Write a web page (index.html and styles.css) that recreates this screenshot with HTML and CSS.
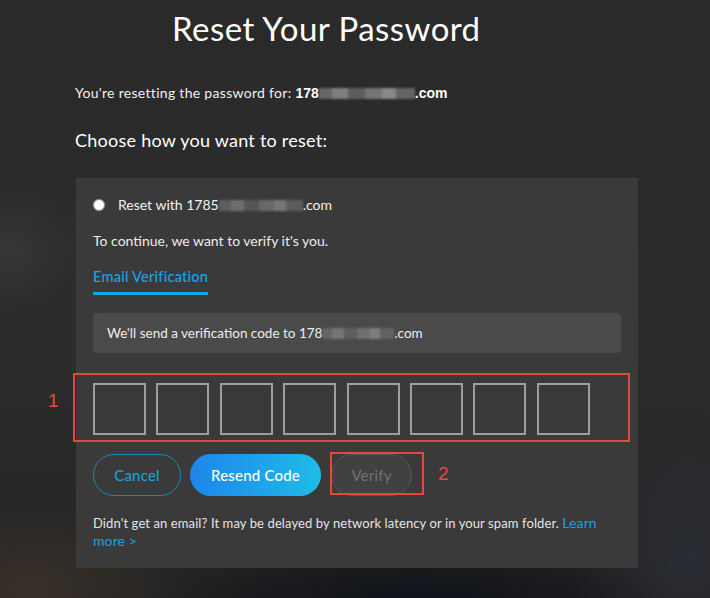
FILE: index.html
```html
<!DOCTYPE html>
<html lang="en">
<head>
<meta charset="utf-8">
<title>Reset Your Password</title>
<link rel="stylesheet" href="styles.css">
</head>
<body>
<main class="page">
  <h1 class="title">Reset Your Password</h1>
  <p class="lead">You're resetting the password for: <b class="acct">178<span class="blur b1"></span>.com</b></p>
  <h2 class="choose">Choose how you want to reset:</h2>
  <section class="panel">
    <label class="option"><span class="radio"></span><span>Reset with 1785<span class="blur b2"></span>.com</span></label>
    <p class="note">To continue, we want to verify it's you.</p>
    <div class="tabs"><span class="tab active">Email Verification</span></div>
    <div class="info">We'll send a verification code to 178<span class="blur b3"></span>.com</div>
    <div class="code-wrap">
      <div class="code-row">
        <span class="cell"></span><span class="cell"></span><span class="cell"></span><span class="cell"></span>
        <span class="cell"></span><span class="cell"></span><span class="cell"></span><span class="cell"></span>
      </div>
      <span class="mark mark1"></span><span class="mark-num n1">1</span>
    </div>
    <div class="actions">
      <button class="btn cancel">Cancel</button>
      <button class="btn resend">Resend Code</button>
      <span class="verify-wrap"><button class="btn verify">Verify</button><span class="mark mark2"></span><span class="mark-num n2">2</span></span>
    </div>
    <p class="help">Didn't get an email? It may be delayed by network latency or in your spam folder. <a class="link" href="#">Learn more &gt;</a></p>
  </section>
</main>
</body>
</html>
```
FILE: styles.css
```css
html, body {
  margin: 0;
  padding: 0;
  height: 100%;
}
body {
  font-family: "Lato", "Open Sans", sans-serif;
  color: #f2f2f2;
  background:
    radial-gradient(ellipse 160px 90px at 30px 590px, rgba(80, 64, 48, 0.5), transparent),
    radial-gradient(ellipse 260px 80px at 420px 610px, rgba(10, 14, 22, 0.9), transparent),
    radial-gradient(ellipse 120px 140px at 690px 560px, rgba(50, 56, 70, 0.45), transparent),
    radial-gradient(ellipse 80px 60px at 10px 250px, rgba(70, 70, 70, 0.4), transparent),
    linear-gradient(180deg, #2a2a2a 0%, #2c2c2c 60%, #222222 100%);
  overflow: hidden;
}
.page {
  padding: 8px 0 0 75px;
}
.title {
  margin: 0 0 0 97px;
  font-size: 33px;
  line-height: 40px;
  font-weight: 400;
  color: #ffffff;
  letter-spacing: 0.45px;
}
.lead {
  margin: 36px 0 0 0;
  font-size: 14px;
  line-height: 18px;
  color: #f0f0f0;
  letter-spacing: 0.3px;
}
.acct {
  font-family: "Liberation Sans", Arial, sans-serif;
  font-weight: 700;
  color: #ffffff;
  letter-spacing: 0;
}
.blur {
  display: inline-block;
  vertical-align: -1px;
  height: 11px;
  filter: blur(0.8px);
  opacity: 0.75;
  background:
    linear-gradient(90deg, #7a7a7a 0 14%, #9a9a9a 14% 30%, #6e6e6e 30% 48%, #8e8e8e 48% 66%, #a8a8a8 66% 80%, #777 80% 100%);
}
.b1 { width: 96px; }
.b2 { width: 84px; opacity: 0.55; }
.b3 { width: 72px; opacity: 0.55; }
.choose {
  margin: 27px 0 0 0;
  font-size: 18px;
  line-height: 22px;
  font-weight: 400;
  color: #ffffff;
  letter-spacing: 0.25px;
}
.panel {
  margin: 27px 0 0 1px;
  width: 528px;
  padding: 18px 17px 18px 17px;
  background: #3a3a3a;
  color: #ececec;
}
.option {
  display: flex;
  align-items: center;
  gap: 13px;
  font-size: 14px;
  line-height: 18px;
  color: #f2f2f2;
}
.radio {
  width: 10px;
  height: 10px;
  border-radius: 50%;
  background: #ffffff;
  border: 1.5px solid #8c8c8c;
  box-shadow: 0 0 0 0.5px #555;
  flex: none;
}
.note {
  margin: 18px 0 0 0;
  font-size: 14px;
  line-height: 18px;
}
.tabs {
  margin-top: 17px;
  display: flex;
}
.tab {
  font-size: 14.5px;
  line-height: 20px;
  padding-bottom: 5px;
  color: #1aa3e6;
  border-bottom: 3px solid #16a6e6;
  font-weight: 500;
  letter-spacing: 0.25px;
}
.info {
  margin-top: 18px;
  height: 40px;
  display: flex;
  align-items: center;
  padding-left: 14px;
  background: #4a4a4a;
  border-radius: 4px;
  font-size: 13.5px;
  color: #ededed;
}
.code-wrap {
  position: relative;
  margin-top: 30px;
}
.code-row {
  display: flex;
  gap: 10.4px;
}
.cell {
  box-sizing: border-box;
  width: 53px;
  height: 52px;
  border: 2px solid #9e9e9e;
  background: #393939;
}
.mark {
  position: absolute;
  border: 2px solid #e4473b;
  box-sizing: border-box;
  pointer-events: none;
}
.mark1 {
  left: -20px;
  top: -10px;
  right: -9px;
  bottom: -7px;
}
.mark-num {
  position: absolute;
  color: #e5483c;
  font-family: "Liberation Sans", Arial, sans-serif;
  font-size: 19px;
  line-height: 20px;
}
.n1 {
  left: -45px;
  top: 8px;
}
.actions {
  margin-top: 19px;
  display: flex;
  gap: 9px;
  align-items: center;
}
.btn {
  box-sizing: border-box;
  height: 42px;
  border-radius: 21px;
  font-family: "Lato", "Open Sans", sans-serif;
  font-size: 15px;
  padding: 0;
  cursor: pointer;
  letter-spacing: 0.2px;
}
.cancel {
  width: 88px;
  background: transparent;
  border: 1.5px solid #1788b5;
  color: #1ea3e6;
}
.resend {
  width: 131px;
  border: none;
  color: #ffffff;
  font-weight: 500;
  background: linear-gradient(90deg, #1d86ea 0%, #1ea6ea 60%, #1fbde6 100%);
}
.verify-wrap {
  position: relative;
  margin-left: 1px;
  display: flex;
}
.verify {
  width: 81px;
  background: #414141;
  border: 1px solid #565656;
  color: #707070;
}
.mark2 {
  left: -1px;
  top: -2px;
  width: 94px;
  height: 43px;
}
.n2 {
  left: 107px;
  top: 10px;
}
.help {
  margin: 18px 0 0 0;
  font-size: 13px;
  line-height: 17px;
  color: #e4e4e4;
  letter-spacing: 0.1px;
}
.link {
  color: #1ca1e4;
  text-decoration: none;
  font-size: 14px;
}
```
